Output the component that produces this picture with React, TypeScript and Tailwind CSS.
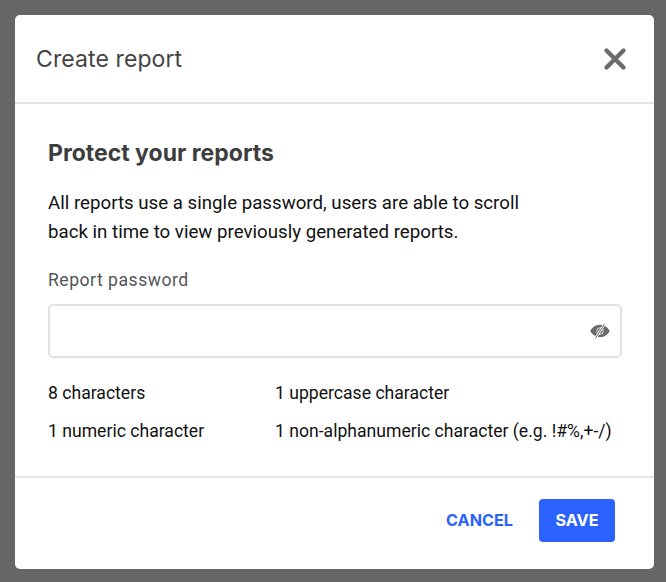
import React from 'react';

const EyeSlashIcon = () => (
  <svg width="20" height="16" viewBox="0 0 20 16" className="text-[#6b6b6b]">
    <path
      fill="currentColor"
      fillRule="evenodd"
      d="M10 1.8c4.4 0 7.9 2.8 9.8 6.2-1.9 3.4-5.4 6.2-9.800 6.200S2.100 11.400.200 8C2.100 4.600 5.600 1.800 10 1.800zm0 2.700a3.500 3.500 0 100 7 3.500 3.500 0 000-7z"
    />
    <circle cx="10" cy="8" r="2.800" fill="currentColor" />
    <path d="M14.600.8 5.400 15.200" stroke="#fff" strokeWidth="2.400" />
    <path d="M14.600.8 5.400 15.200" stroke="currentColor" strokeWidth="1" />
  </svg>
);

const CloseIcon = () => (
  <svg width="24" height="24" viewBox="0 0 24 24" className="text-[#6b6b6b]">
    <path d="M3.500 3.500 20.500 20.500M20.500 3.500 3.500 20.500" stroke="currentColor" strokeWidth="4.400" strokeLinecap="round" />
  </svg>
);

const requirements = [
  ['8 characters', '1 uppercase character'],
  ['1 numeric character', '1 non-alphanumeric character (e.g. !#%,+-/)'],
];

export default function App() {
  return (
    <div className="w-[666px] h-[582px] bg-[#666666] p-[15px] font-['Inter',sans-serif]">
      <div className="w-[639px] h-[554px] bg-white rounded-[5px] flex flex-col">
        <div className="h-[89px] flex items-center justify-between pl-[21px] pr-[27px] border-b-2 border-[#e4e4e4] shrink-0">
          <h1 className="text-[23px] leading-[30px] text-[#444444] tracking-[0.1px]">Create report</h1>
          <CloseIcon />
        </div>
        <div className="flex-1 pl-[33px] pr-[33px] pt-[35px]">
          <h2 className="text-[23px] leading-[28px] font-bold text-[#3d3d3d]">Protect your reports</h2>
          <p className="mt-[22px] text-[18.7px] leading-[29px] text-[#111111] font-['Roboto',sans-serif]">
            All reports use a single password, users are able to scroll
            <br />
            back in time to view previously generated reports.
          </p>
          <label className="block mt-[21px] text-[17.6px] leading-[24px] text-[#555555] font-['Roboto',sans-serif] tracking-[0.5px]">Report password</label>
          <div className="mt-[12px] h-[54px] w-[574px] border-2 border-[#e2e2e2] rounded-[5px] flex items-center justify-end pr-[10px]">
            <EyeSlashIcon />
          </div>
          <div className="mt-[24px] flex flex-col gap-[16px] font-['Roboto',sans-serif] text-[17.6px] leading-[22px] text-[#111111]">
            {requirements.map(row => (
              <div key={row[0]} className="flex">
                <span className="w-[227px]">{row[0]}</span>
                <span>{row[1]}</span>
              </div>
            ))}
          </div>
        </div>
        <div className="h-[93px] pb-[6px] border-t-2 border-[#e4e4e4] flex items-center justify-end pr-[39px] gap-[26px] shrink-0">
          <button className="text-[16.2px] leading-[22px] pb-[2px] font-bold text-[#2b62ff]">CANCEL</button>
          <button className="w-[76px] h-[43px] pb-[1px] rounded-[4px] bg-[#2b62ff] text-white text-[16.2px] font-bold">SAVE</button>
        </div>
      </div>
    </div>
  );
}
